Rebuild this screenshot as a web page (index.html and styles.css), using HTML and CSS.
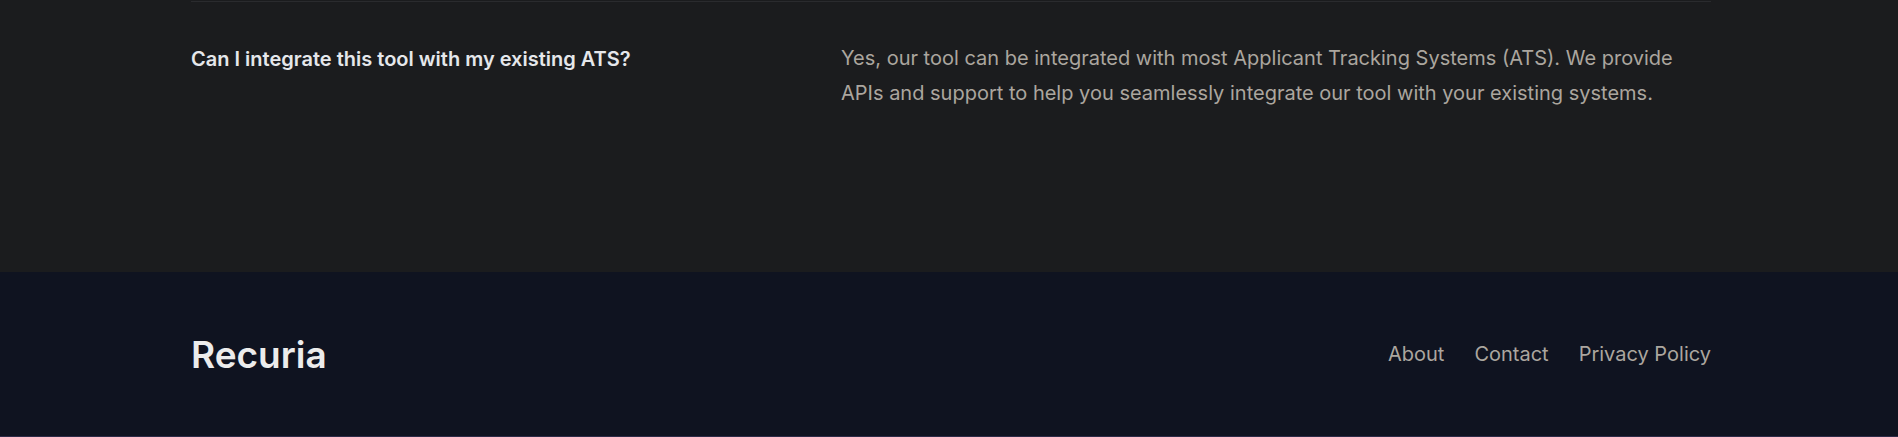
FILE: index.html
```html
<!DOCTYPE html>
<html lang="en">
<head>
<meta charset="utf-8">
<title>Recuria</title>
<link rel="stylesheet" href="styles.css">
</head>
<body>
<section class="faq">
  <div class="container">
    <div class="faq-item">
      <h3 class="faq-q">Can I integrate this tool with my existing ATS?</h3>
      <p class="faq-a">Yes, our tool can be integrated with most Applicant Tracking Systems (ATS). We provide APIs and support to help you seamlessly integrate our tool with your existing systems.</p>
    </div>
  </div>
</section>
<footer class="footer">
  <div class="container footer-inner">
    <div class="logo">Recuria</div>
    <nav class="footer-nav">
      <a href="#">About</a>
      <a href="#">Contact</a>
      <a href="#">Privacy Policy</a>
    </nav>
  </div>
</footer>
</body>
</html>
```
FILE: styles.css
```css
* { box-sizing: border-box; }
html, body { margin: 0; padding: 0; }
body {
  font-family: Inter, "Noto Sans", sans-serif;
  background: #1b1c1e;
  -webkit-font-smoothing: antialiased;
}
.container {
  width: 1524px;
  margin: 0 auto;
  padding-left: 4px;
}
.faq {
  background: #1b1c1e;
  height: 272px;
  padding-top: 1px;
}
.faq-item {
  border-top: 1px solid #2a2b2e;
  display: grid;
  grid-template-columns: 650px 1fr;
  padding-top: 43px;
}
.faq-q {
  margin: 0;
  font-size: 20px;
  line-height: 28px;
  font-weight: 600;
  color: #e5e7eb;
}
.faq-a {
  margin: -4px 0 0;
  font-size: 20px;
  line-height: 35px;
  color: #aba69f;
  max-width: 860px;
}
.footer {
  background: #0f1320;
  height: 165px;
  border-bottom: 1px solid #2d2b48;
}
.footer-inner {
  height: 100%;
  display: flex;
  align-items: center;
  justify-content: space-between;
}
.logo {
  font-size: 37px;
  font-weight: 600;
  color: #ececec;
}
.footer-nav {
  display: flex;
  gap: 30px;
}
.footer-nav a {
  color: #aba69f;
  text-decoration: none;
  font-size: 20px;
}
```
